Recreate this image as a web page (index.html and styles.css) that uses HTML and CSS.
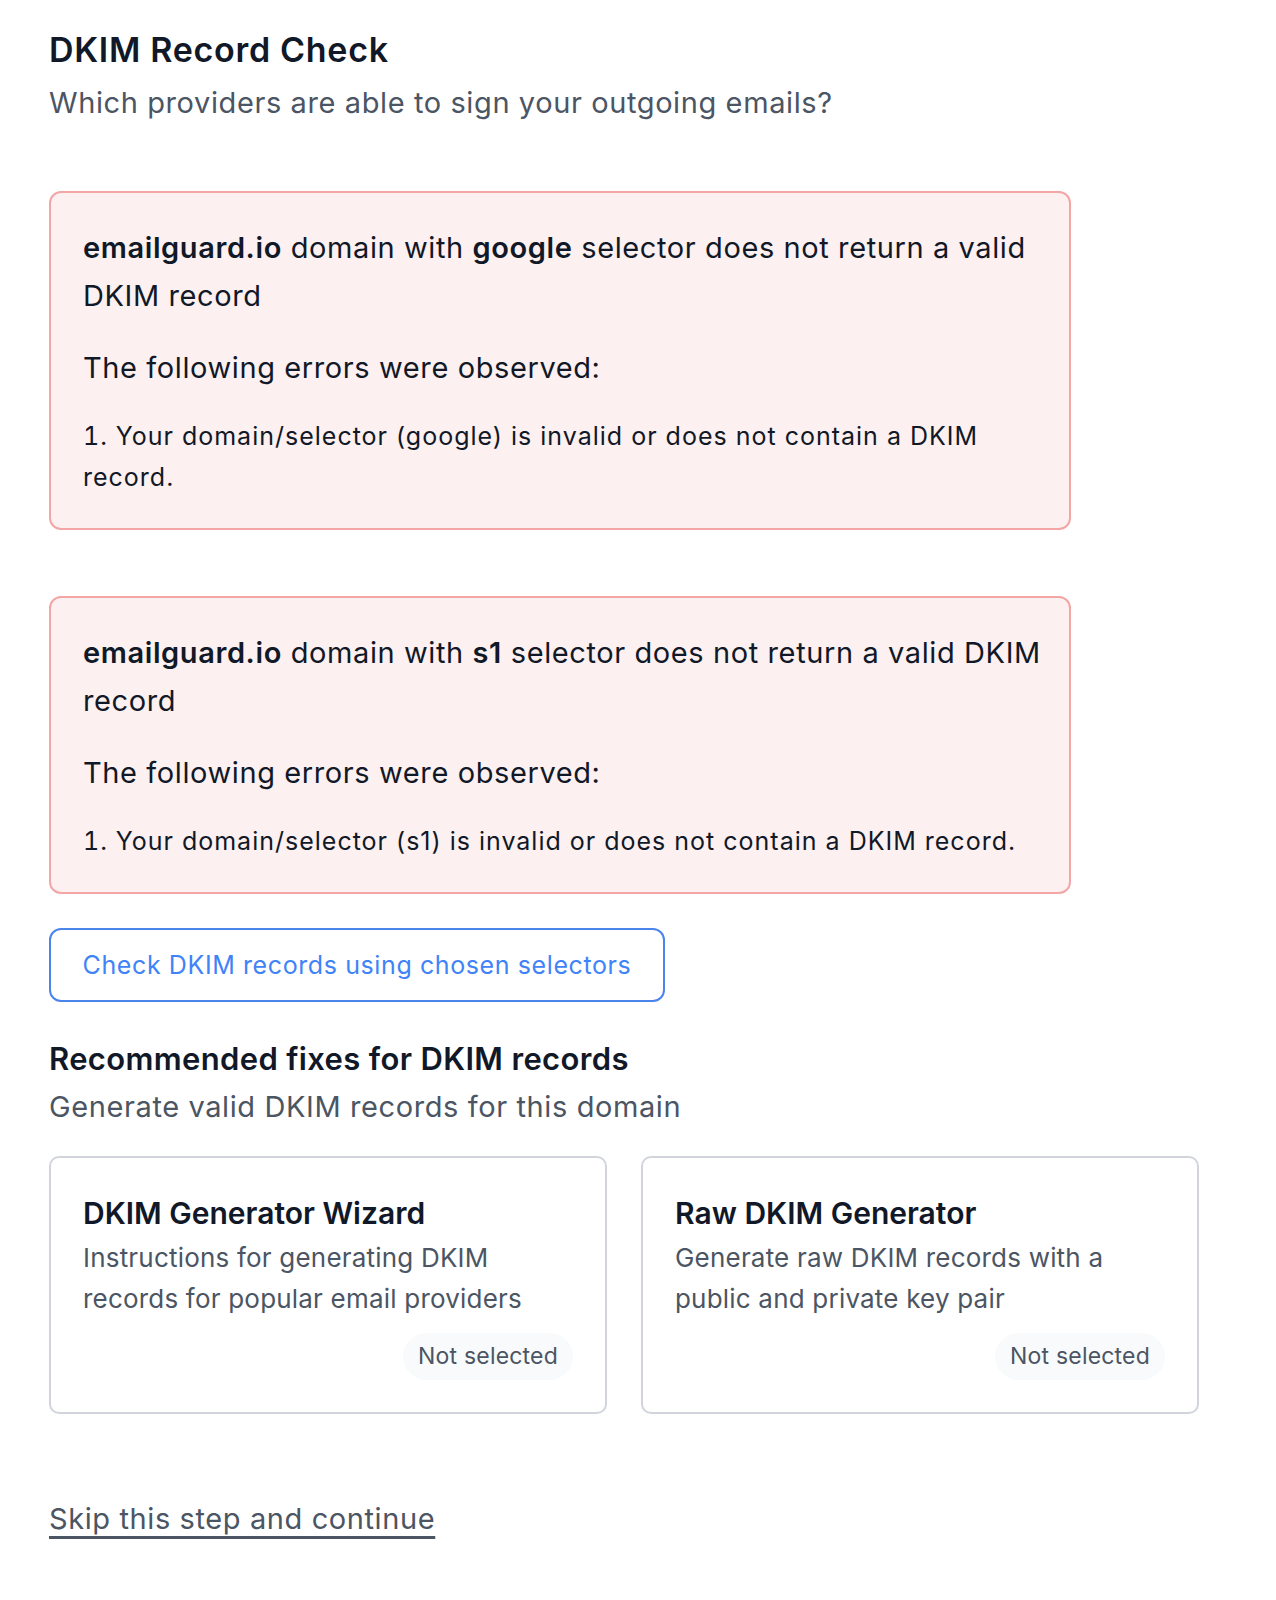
FILE: index.html
```html
<!DOCTYPE html>
<html lang="en">
    <head>
        <meta charset="UTF-8">
        <meta name="viewport" content="width=device-width, initial-scale=1.0">
        <link rel="stylesheet" href="styles.css">
        <title>DKIM Record Check</title>
    </head>
    <body>
        <div class="page">
            <h1 class="title">DKIM Record Check</h1>
            <p class="subtitle">Which providers are able to sign your outgoing emails?</p>

            <div class="error-card">
                <p class="error-head"><b>emailguard.io</b> domain with <b>google</b> selector does not return a valid DKIM record</p>
                <p class="error-sub">The following errors were observed:</p>
                <ol class="error-list">
                    <li>Your domain/selector (google) is invalid or does not contain a DKIM record.</li>
                </ol>
            </div>

            <div class="error-card">
                <p class="error-head"><b>emailguard.io</b> domain with <b>s1</b> selector does not return a valid DKIM record</p>
                <p class="error-sub">The following errors were observed:</p>
                <ol class="error-list">
                    <li>Your domain/selector (s1) is invalid or does not contain a DKIM record.</li>
                </ol>
            </div>

            <button class="check-btn">Check DKIM records using chosen selectors</button>

            <h2 class="section-title">Recommended fixes for DKIM records</h2>
            <p class="subtitle sub-tight">Generate valid DKIM records for this domain</p>

            <div class="options">
                <div class="option">
                    <h3 class="option-title">DKIM Generator Wizard</h3>
                    <p class="option-desc">Instructions for generating DKIM records for popular email providers</p>
                    <div class="option-foot"><span class="badge">Not selected</span></div>
                </div>
                <div class="option">
                    <h3 class="option-title">Raw DKIM Generator</h3>
                    <p class="option-desc">Generate raw DKIM records with a public and private key pair</p>
                    <div class="option-foot"><span class="badge">Not selected</span></div>
                </div>
            </div>

            <a class="skip" href="#">Skip this step and continue</a>
        </div>
    </body>
</html>
```

FILE: styles.css
```css
body, html {
    margin: 0;
    background: #fff;
}

.page {
    font-family: Inter, "Noto Sans", sans-serif;
    color: #111827;
    padding: 24px 49px 60px 49px;
    width: 1150px;
}

.title {
    font-size: 34px;
    font-weight: 600;
    letter-spacing: 0.7px;
    margin: 0;
    line-height: 52px;
}

.subtitle {
    font-size: 29px;
    letter-spacing: 0.6px;
    color: #4b5563;
    margin: 4px 0 0 0;
    line-height: 46px;
}

.sub-tight {
    margin-top: 1px;
}

.error-card {
    width: 1022px;
    box-sizing: border-box;
    background: #fcf0f0;
    border: 2px solid #f4a6a6;
    border-radius: 12px;
    padding: 31px 18px 30px 32px;
    margin-top: 65px;
}

.error-card + .error-card {
    margin-top: 66px;
}

.error-head {
    font-size: 29px;
    letter-spacing: 0.6px;
    line-height: 48px;
    margin: 0;
}

.error-head b {
    font-weight: 600;
}

.error-sub {
    font-size: 29px;
    letter-spacing: 0.6px;
    line-height: 48px;
    margin: 24px 0 0 0;
}

.error-list {
    font-size: 25px;
    letter-spacing: 1px;
    line-height: 41px;
    margin: 24px 0 0 0;
    padding-left: 0;
    list-style-position: inside;
    max-width: 954px;
}

.check-btn {
    display: block;
    margin-top: 34px;
    width: 616px;
    height: 74px;
    background: #fff;
    border: 2px solid #4a84ec;
    border-radius: 12px;
    color: #3f83f8;
    font-family: Inter, "Noto Sans", sans-serif;
    font-size: 25px;
    letter-spacing: 0.6px;
}

.section-title {
    font-size: 31px;
    font-weight: 600;
    letter-spacing: 0.35px;
    margin: 33px 0 0 0;
    line-height: 48px;
}

.options {
    display: grid;
    grid-template-columns: 558px 558px;
    gap: 34px;
    margin-top: 26px;
}

.option {
    box-sizing: border-box;
    height: 258px;
    border: 2px solid #d1d5db;
    border-radius: 10px;
    padding: 33px 32px 32px 32px;
    display: flex;
    flex-direction: column;
}

.option-title {
    font-size: 30px;
    font-weight: 600;
    margin: 0;
    line-height: 44px;
}

.option-desc {
    font-size: 26px;
    letter-spacing: 0.2px;
    color: #4b5563;
    margin: 2px 0 0 0;
    line-height: 41px;
    max-width: 460px;
}

.option-foot {
    display: flex;
    justify-content: flex-end;
    margin-top: auto;
}

.badge {
    background: #f9fafb;
    color: #4b5563;
    font-size: 23px;
    letter-spacing: 0.2px;
    border-radius: 24px;
    padding: 0 15px;
    line-height: 47px;
}

.skip {
    display: inline-block;
    margin-top: 85px;
    font-size: 29px;
    letter-spacing: 0.6px;
    line-height: 40px;
    color: #4b5563;
    text-decoration: underline;
    text-decoration-thickness: 3px;
    text-underline-offset: 7px;
}
```
